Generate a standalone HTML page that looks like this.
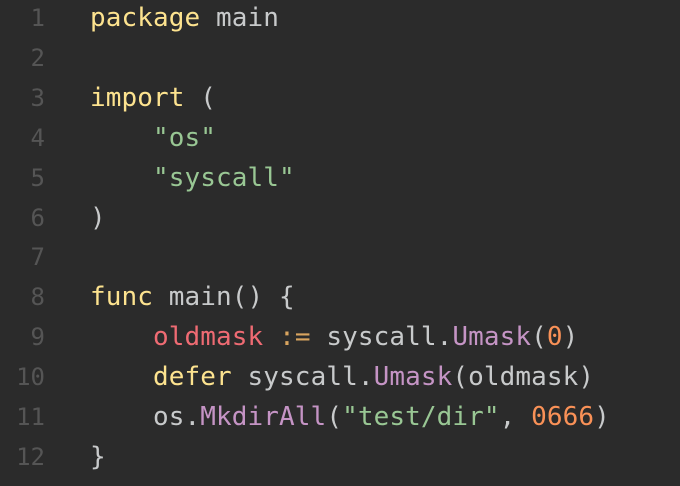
<html><head><style>
body{margin:0;background:#2b2b2b;width:680px;height:486px;overflow:hidden}
.c{position:absolute;top:-1px;left:0;font-family:"DejaVu Sans Mono",monospace;font-size:26px;letter-spacing:0.1px;line-height:39.9px;color:#c8cacb;white-space:pre}
.n{position:absolute;top:-1px;left:0;width:45px;text-align:right;font-family:"DejaVu Sans Mono",monospace;font-size:24px;line-height:39.9px;color:#555;white-space:pre}
.k{color:#fde38f}.s{color:#99c794}.r{color:#ef6b73}.o{color:#d9a45f}.p{color:#c594c5}.m{color:#f99157}
</style></head><body>
<div class="n">1
2
3
4
5
6
7
8
9
10
11
12</div>
<div class="c" style="left:90px"><span class="k">package</span> main

<span class="k">import</span> (
    <span class="s">"os"</span>
    <span class="s">"syscall"</span>
)

<span class="k">func</span> main() {
    <span class="r">oldmask</span> <span class="o">:=</span> syscall.<span class="p">Umask</span>(<span class="m">0</span>)
    <span class="k">defer</span> syscall.<span class="p">Umask</span>(oldmask)
    os.<span class="p">MkdirAll</span>(<span class="s">"test/dir"</span>, <span class="m">0666</span>)
}</div>
</body></html>
